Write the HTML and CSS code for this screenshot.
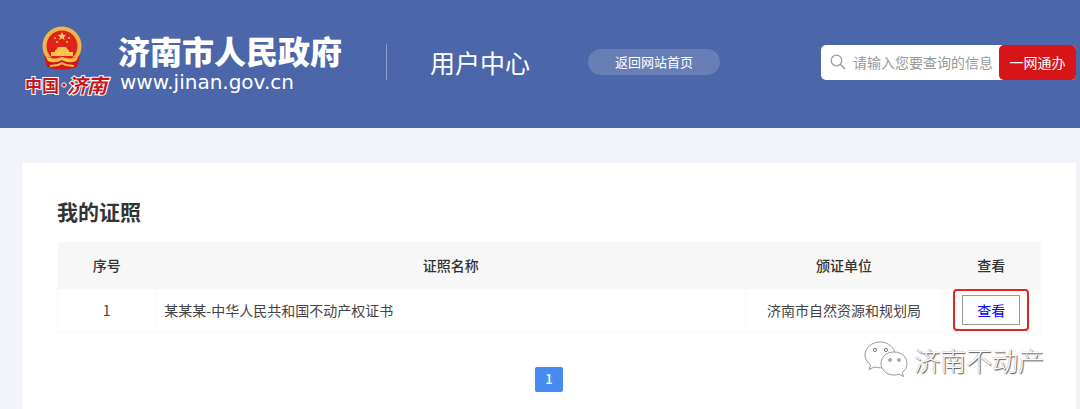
FILE: index.html
```html
<!DOCTYPE html>
<html lang="zh-CN">

<head>
  <meta charset="UTF-8">
  <meta name="viewport" content="width=device-width, initial-scale=1.0">
  <title>用户中心</title>
  <link rel="stylesheet" href="styles.css">
</head>

<body>
  <div class="header">
    <div class="logo">
      <svg class="emblem" viewBox="0 0 84 72" role="img" aria-label="中国济南">
        <!--国徽-->
        <path d="M21 28 L23 41 Q38 46 53 41 L55 28z" fill="#d71518" />
        <circle cx="38" cy="20" r="19.500" fill="#f0b64a" />
        <circle cx="38" cy="20" r="15.500" fill="#e0231a" />
        <path d="M38 6l1.200 2.700 3 .3-2.300 2 .7 2.900-2.600-1.600-2.600 1.600.7-2.900-2.300-2 3-.3z" fill="#ffd45c" />
        <g fill="#fbc34d">
          <circle cx="31" cy="12" r="1.100" />
          <circle cx="45" cy="12" r="1.100" />
          <circle cx="33" cy="16" r="1.100" />
          <circle cx="43" cy="16" r="1.100" />
          <path d="M34 21h8l2 3h-12z" />
          <path d="M31 24h14v2h4v4H27v-4h4z" />
        </g>
        <path d="M20 30 Q38 36 56 30 L53 40 Q38 44 23 40z" fill="#d71518" />
        <path d="M21 29q5 5 13 3l4-1 4 1q8 2 13-3l-3 6q-7 3-14-1-7 4-14 1z" fill="#f4c14d" />
        <path d="M26 40l8-1 4-2 4 2 8 1" fill="none" stroke="#f4c14d" stroke-width="2" />
        <!--中国·济南-->
        <circle cx="40" cy="59" r="2.200" fill="#c5161c" stroke="#fff" stroke-width="1" />
        <g class="logo-word">
          <text x="1" y="66" font-size="17">中国</text>
          <text class="brush" x="43" y="67" font-size="20">济南</text>
        </g>
      </svg>
      <div class="site">
        <h1>济南市人民政府</h1>
        <p>www.jinan.gov.cn</p>
      </div>
    </div>
    <h2 class="center">用户中心</h2>
    <a class="back" href="#">返回网站首页</a>
    <form class="search">
      <label class="field">
        <svg viewBox="0 0 16 16" width="16" height="16" aria-hidden="true">
          <circle cx="6.500" cy="6.500" r="5.300" fill="none" stroke="#999" stroke-width="1.200" />
          <path d="M10.500 10.500l4.500 4.500" stroke="#999" stroke-width="1.400" />
        </svg>
        <input type="text" placeholder="请输入您要查询的信息" aria-label="请输入您要查询的信息">
      </label>
      <button type="button">一网通办</button>
    </form>
  </div>

  <div class="main">
    <h2>我的证照</h2>
    <table>
      <thead>
        <tr>
          <th class="w10">序号</th>
          <th>证照名称</th>
          <th class="w20">颁证单位</th>
          <th class="w10">查看</th>
        </tr>
      </thead>
      <tbody>
        <tr>
          <td>1</td>
          <td class="name">某某某-中华人民共和国不动产权证书</td>
          <td>济南市自然资源和规划局</td>
          <td><a class="view" href="#">查看</a></td>
        </tr>
      </tbody>
    </table>
    <div class="page">
      <button type="button" class="current">1</button>
    </div>
    <!--公众号水印-->
    <div class="mark">
      <svg viewBox="0 0 44 38" width="44" height="38" aria-hidden="true">
        <g fill="#fff" stroke="#999" stroke-width="1">
          <path d="M16 1C8 1 1 6.500 1 14c0 4 2.200 7.500 5.800 10L5 28.500l5.500-2.500c2 .6 4 .8 6 .8 8 0 14.500-5.600 14.500-13S24 1 16 1z" />
          <path d="M30 11c-7.500 0-13 5-13 11.500S22.500 34 30 34c1.800 0 3.400-.2 5-.8l4.500 2.300-1.300-4c3-2.200 4.800-5.300 4.800-9C43 16 37.500 11 30 11z" />
        </g>
        <g fill="#fff" stroke="#777">
          <circle cx="11" cy="9" r="1.600" />
          <circle cx="22" cy="9" r="1.600" />
          <circle cx="26" cy="19" r="1.300" />
          <circle cx="35" cy="19" r="1.300" />
        </g>
      </svg>
      <span>济南不动产</span>
    </div>
  </div>
</body>

</html>
```
FILE: styles.css
```css
* {
  margin: 0;
  padding: 0;
  box-sizing: border-box;
}

body {
  display: flex;
  flex-direction: column;
  min-height: 100vh;
  background-color: #f2f3f9;
  color: #333;
  font-family: "Noto Sans CJK SC", sans-serif;
  font-size: 14px;
  line-height: 20px;
}

a {
  text-decoration: none;
}

/* 头部 */
.header {
  display: flex;
  align-items: center;
  height: 128px;
  padding: 0 4px 4px 24px;
  background-color: #4b67a9;
  color: #fff;
  white-space: nowrap;
}

.logo {
  display: flex;
  align-items: center;
  gap: 10px;
  padding-right: 44px;
}

.emblem {
  width: 84px;
  height: 72px;
  overflow: visible;
}

.logo-word {
  fill: #c5161c;
  stroke: #fff;
  stroke-width: 2px;
  paint-order: stroke;
  font-family: "Noto Sans CJK SC", sans-serif;
  font-weight: 700;
}

.brush {
  font-style: italic;
}

.site h1 {
  font-size: 32px;
  font-weight: 900;
  line-height: 40px;
}

.site p {
  padding-left: 2px;
  font-family: "DejaVu Sans", sans-serif;
  font-size: 20px;
  line-height: 24px;
}

.center {
  padding: 0 58px 0 44px;
  background: linear-gradient(#8a9cc8, #8a9cc8) left center / 1px 100% no-repeat;
  font-size: 25px;
  font-weight: 400;
  line-height: 36px;
}

.back {
  width: 132px;
  border-radius: 13px;
  background-color: #687fb6;
  color: #fff;
  font-size: 13px;
  line-height: 26px;
  text-align: center;
}

.search {
  display: flex;
  width: 255px;
  height: 35px;
  margin-left: auto;
  border-radius: 5px;
  background-color: #fff;
}

.field {
  display: flex;
  flex: 1;
  align-items: center;
  gap: 7px;
  min-width: 0;
  padding-left: 9px;
}

.field input {
  flex: 1;
  min-width: 0;
  border: 0;
  outline: none;
  background: none;
  font: inherit;
}

.field input::placeholder {
  color: #999;
}

.search button {
  flex: none;
  width: 77px;
  border: 0;
  border-radius: 5px;
  background-color: #d71518;
  color: #fff;
  font: inherit;
}

/* 内容 */
.main {
  position: relative;
  flex: 1;
  margin: 35px 4px 0 22px;
  padding: 34px 35px 16px;
  background-color: #fff;
}

.main h2 {
  margin-bottom: 17px;
  font-size: 21px;
  line-height: 28px;
}

table {
  width: 100%;
  border-collapse: collapse;
  table-layout: fixed;
}

th {
  height: 46px;
  background-color: #f7f7f7;
  font-weight: 500;
}

td {
  height: 43px;
  border: 1px solid #f8f8f8;
  color: #444;
  text-align: center;
}

.w10 {
  width: 10%;
}

.w20 {
  width: 20%;
}

td.name {
  padding-left: 8px;
  text-align: left;
}

.view {
  position: relative;
  display: inline-block;
  padding: 4px 14px;
  border: 1px solid #999;
  color: #00f;
  vertical-align: middle;
}

/* 红框提示 */
.view::after {
  content: "";
  position: absolute;
  inset: -7px -10px;
  border: 2px solid #e3241f;
  border-radius: 4px;
}

.page {
  padding-top: 35px;
  text-align: center;
}

.page .current {
  width: 28px;
  height: 25px;
  border: 0;
  border-radius: 2px;
  background-color: #458bf0;
  color: #fff;
  font: inherit;
  font-size: 13px;
  font-weight: 500;
}

.mark {
  position: absolute;
  right: 32px;
  bottom: 30px;
  display: flex;
  align-items: center;
  gap: 6px;
  color: #fff;
  font-size: 26px;
  font-weight: 300;
  line-height: 38px;
  text-shadow: 1px 1px 1px #555, 0 0 1px #888;
}
```
